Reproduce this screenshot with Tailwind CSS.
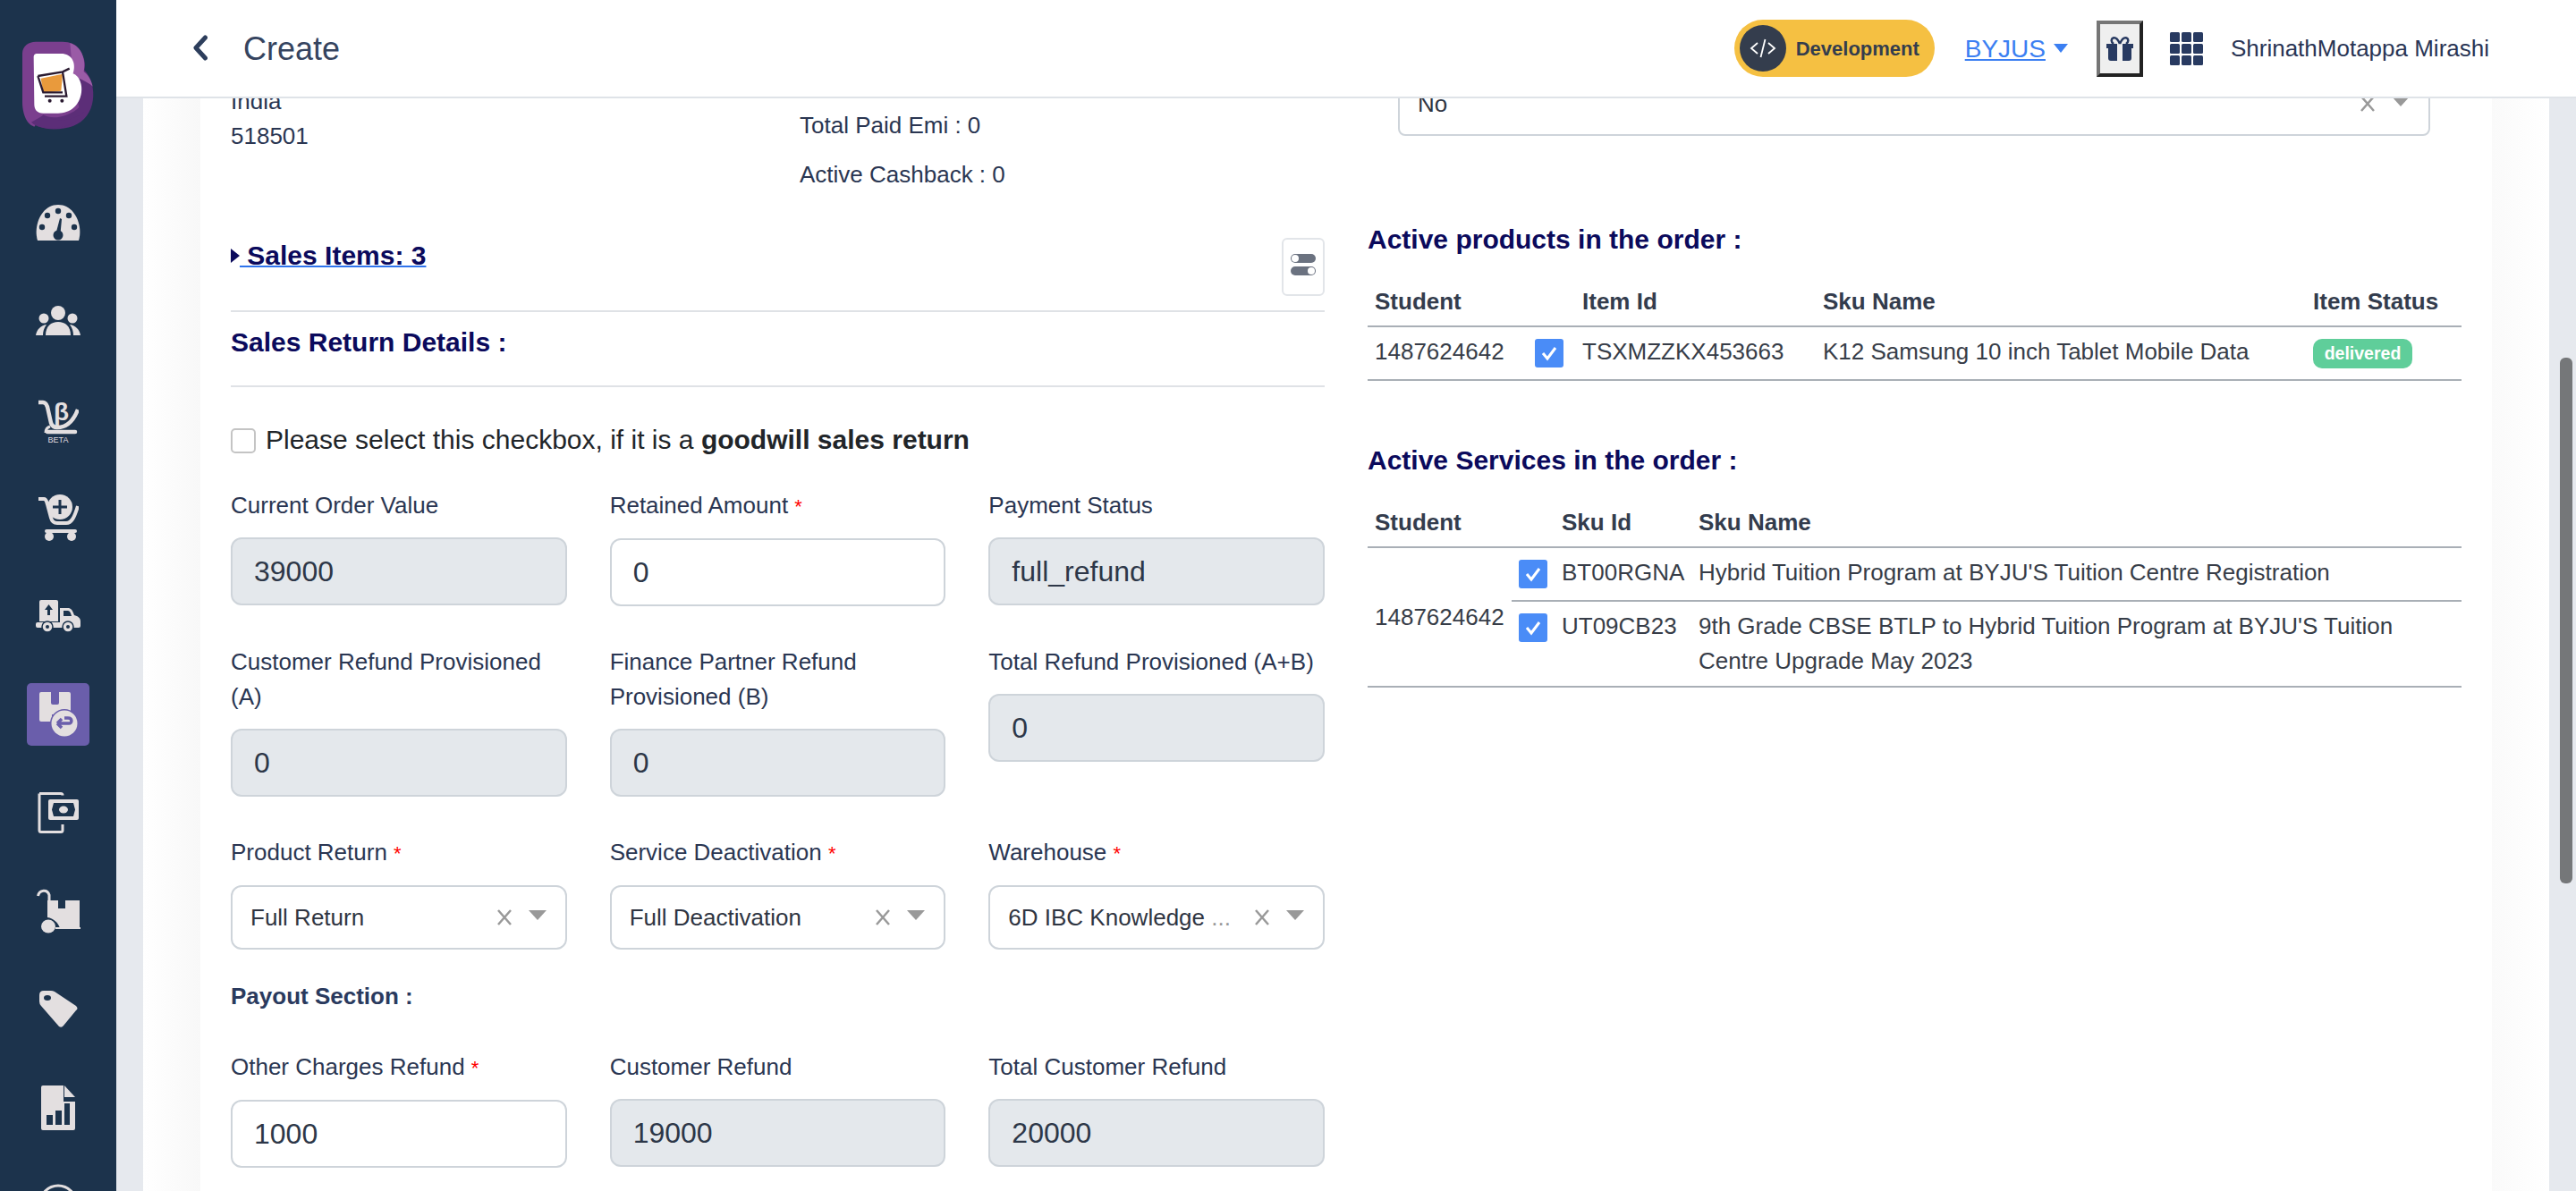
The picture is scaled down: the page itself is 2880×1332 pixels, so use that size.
<!DOCTYPE html>
<html lang="en">
<head>
    <meta charset="UTF-8">
    <meta name="viewport" content="width=device-width, initial-scale=1.0">
    <script src="https://cdn.jsdelivr.net/npm/@tailwindcss/browser@4"></script>
    <title>Create</title>
</head>
<body class="font-['Liberation_Sans',sans-serif] text-[26px] leading-[39px] text-[#2a3652]">
<div class="flex h-[1332px] w-[2880px] overflow-hidden">

    <!-- Sidebar -->
    <aside class="flex w-[130px] shrink-0 flex-col items-center overflow-hidden bg-[#1c334c] pt-[35px] *:shrink-0">
        <svg class="ml-[5px]" width="105" height="120" viewBox="0 0 315 360">
            <path d="M150 40C215 35 250 90 238 130C285 180 280 290 200 318C150 335 70 335 45 285C30 260 30 240 30 200L60 60Z" fill="#5c2e78"/>
            <path d="M30 75C30 50 50 35 75 35H165C215 35 240 70 235 120L200 150L220 255C190 285 130 300 100 280L70 320C40 310 30 270 30 235Z" fill="#7b3f8e"/>
            <path d="M190 40C225 50 245 90 236 135C250 145 262 165 266 185C250 170 225 160 200 150Z" fill="#9a5ba6"/>
            <path d="M100 282C140 305 200 305 235 270C215 310 170 325 130 325C100 325 75 320 60 305Z" fill="#5c2e78"/>
            <path d="M68 88C68 78 72 75 80 75H160C195 75 212 105 200 142C222 150 232 180 228 205C222 250 190 275 150 275H100C80 275 70 262 70 245Z" fill="#fff"/>
            <path d="M92 158L165 143L160 200L100 206Z" fill="#e99a3c"/>
            <path d="M82 150L165 136L188 125M165 136L178 218H105M82 150L100 205H165" fill="none" stroke="#2a1a30" stroke-width="7"/>
            <circle cx="122" cy="233" r="6" fill="#2a1a30"/>
            <circle cx="163" cy="233" r="6" fill="#2a1a30"/>
        </svg>

        <svg class="mt-[74px]" width="50" height="40" viewBox="0 0 50 40" fill="#e3dfe0">
            <path d="M2 40C-3 24 6 0 25 0C44 0 53 24 48 40Z"/>
            <g fill="#1c334c">
                <circle cx="7" cy="25" r="3.2"/>
                <circle cx="13" cy="12" r="3.2"/>
                <circle cx="25" cy="7" r="3.2"/>
                <circle cx="37" cy="12" r="3.2"/>
                <circle cx="43" cy="25" r="3.2"/>
                <circle cx="25" cy="34" r="5.5"/>
                <path d="M27 15L29 16L27.5 32L22.5 32Z"/>
            </g>
        </svg>

        <svg class="mt-[73px]" width="50" height="33" viewBox="0 0 50 33" fill="#e3dfe0">
            <circle cx="25" cy="8" r="8"/>
            <path d="M11 33C11 23 17 18 25 18C33 18 39 23 39 33Z"/>
            <circle cx="9" cy="14" r="5.5"/>
            <circle cx="41" cy="14" r="5.5"/>
            <path d="M0 33C1 27 5 22 12 21C9 25 8 29 8 33Z"/>
            <path d="M50 33C49 27 45 22 38 21C41 25 42 29 42 33Z"/>
        </svg>

        <svg class="mt-[72px]" width="46" height="49" viewBox="0 0 46 49" fill="none" stroke="#e3dfe0">
            <path d="M1 3H6C9 3 10 5 11 8L15 26C16 29 18 31 22 31C32 31 40 24 45 11" stroke-width="4.500"/>
            <path d="M11 36H42" stroke-width="4.500" stroke-linecap="round"/>
            <path d="M9 37C9 33 11 31 14 30" stroke-width="3"/>
            <text x="18" y="23" font-size="28" font-weight="700" fill="#e3dfe0" stroke="none">β</text>
            <text x="23" y="48" font-size="9" text-anchor="middle" fill="#e3dfe0" stroke="none">BETA</text>
        </svg>

        <svg class="mt-[57px]" width="46" height="52" viewBox="0 0 46 52" fill="none" stroke="#e3dfe0">
            <path d="M1 5H7C10 5 10 8 11 11L15 26C16 30 18 32 22 32H32C38 32 41 26 45 13" stroke-width="4"/>
            <path d="M10 41H42" stroke-width="4" stroke-linecap="round"/>
            <circle cx="25" cy="14" r="14" fill="#e3dfe0" stroke="none"/>
            <path d="M25 6V22M17 14H33" stroke="#1c334c" stroke-width="3"/>
            <circle cx="13" cy="47" r="5" fill="#e3dfe0" stroke="none"/>
            <circle cx="38" cy="47" r="5" fill="#e3dfe0" stroke="none"/>
        </svg>

        <svg class="mt-[66px]" width="50" height="36" viewBox="0 0 50 36" fill="#e3dfe0">
            <path d="M4 2Q4 0 6 0H23Q25 0 25 2V24H4Z"/>
            <path d="M14.500 5L19 11H16V17H13V11H10Z" fill="#1c334c"/>
            <path d="M0 27Q0 25 2 25H27V9H36C39 9 41 11 43 17C47 18 50 20 50 24V29Q50 31 48 31H2Q0 31 0 29Z"/>
            <path d="M31 12H36C38 12 39 14 40 18H31Z" fill="#1c334c"/>
            <circle cx="13" cy="30" r="6" fill="#e3dfe0" stroke="#1c334c" stroke-width="1.500"/>
            <circle cx="36" cy="30" r="6" fill="#e3dfe0" stroke="#1c334c" stroke-width="1.500"/>
            <circle cx="13" cy="30" r="2" fill="#1c334c"/>
            <circle cx="36" cy="30" r="2" fill="#1c334c"/>
        </svg>

        <div class="mt-[57px] flex h-[70px] w-[70px] items-center justify-center rounded-[5px] bg-[#6a5eab]">
            <svg width="43" height="50" viewBox="0 0 43 50">
                <path d="M0 2Q0 0 2 0H13V12Q13 14 15 14H20Q22 14 22 12V0H33Q35 0 35 2V20H0V2ZM0 20H14V33H2Q0 33 0 31Z" fill="#e3dfe0"/>
                <path d="M14 20H35V25H14Z" fill="#e3dfe0"/>
                <circle cx="28" cy="35" r="16" fill="#6a5eab"/>
                <circle cx="28" cy="35" r="14.500" fill="#e3dfe0"/>
                <path d="M20 35H33C37 35 37 29 32 29H28M20 35L25 30M20 35L25 40" fill="none" stroke="#6a5eab" stroke-width="3.500"/>
            </svg>
        </div>

        <svg class="mt-[52px]" width="46" height="46" viewBox="0 0 46 46">
            <path d="M2 1.500H26Q28 1.500 28 3.500M28 36V42.500Q28 44.500 26 44.500H4Q2 44.500 2 42.500V1.500" fill="none" stroke="#e3dfe0" stroke-width="3"/>
            <rect x="12" y="8" width="34" height="23" rx="2" fill="#e3dfe0"/>
            <path d="M18 12H40L42 19.500L40 27H18L16 19.500Z" fill="#1c334c"/>
            <ellipse cx="29" cy="19.500" rx="5" ry="4" fill="#e3dfe0"/>
        </svg>

        <svg class="mt-[62px]" width="49" height="50" viewBox="0 0 49 50" fill="#e3dfe0">
            <path d="M1.500 8C3 1 12 0 14 7V32" fill="none" stroke="#e3dfe0" stroke-width="3"/>
            <path d="M12 13H24V22H32V13H48V44H26C24 38 19 33 12 32Z"/>
            <ellipse cx="13" cy="42" rx="8" ry="7.500"/>
            <path d="M21 43H49V45H21Z"/>
        </svg>

        <svg class="mt-[64px]" width="43" height="42" viewBox="0 0 43 42">
            <path d="M0 5Q0 0 5 0H13Q15 0 17 1L41 17Q44 20 41 22L27 39Q25 42 22 40L2 17Q0 15 0 12Z" fill="#e3dfe0"/>
            <ellipse cx="9" cy="8" rx="4" ry="3" fill="#1c334c"/>
        </svg>

        <svg class="mt-[64px]" width="38" height="50" viewBox="0 0 38 50">
            <path d="M0 2Q0 0 2 0H25V18H38V48Q38 50 36 50H2Q0 50 0 48Z" fill="#e3dfe0"/>
            <path d="M26 0L38 13H26Z" fill="#e3dfe0"/>
            <path d="M6 33H13V44H6ZM16 28H23V44H16ZM26 20H32V44H26Z" fill="#1c334c"/>
        </svg>

        <svg class="mt-[60px]" width="44" height="44" viewBox="0 0 44 44" fill="none" stroke="#e3dfe0" stroke-width="3">
            <circle cx="22" cy="22" r="20"/>
            <circle cx="22" cy="22" r="12"/>
        </svg>
    </aside>

    <div class="flex min-w-0 flex-1 flex-col">
        <!-- Top bar -->
        <header class="flex h-[110px] shrink-0 items-center border-b-2 border-[#dfe3e8] bg-white pr-[97px] pl-[85px]">
            <svg class="mt-[-2px]" width="17" height="29" viewBox="0 0 17 29" fill="none" stroke="#2d3e5c" stroke-width="5" stroke-linecap="round" stroke-linejoin="round">
                <path d="M14.500 3L4 14.500L14.500 26"/>
            </svg>
            <span class="ml-[40px] text-[36px] text-[#35445f]">Create</span>

            <div class="ml-auto flex items-center">
                <div class="flex h-[64px] w-[224px] items-center rounded-full bg-[#f5c042] pl-[6px]">
                    <span class="flex h-[52px] w-[52px] items-center justify-center rounded-full bg-[#343d4d]">
                        <svg width="30" height="30" viewBox="0 0 30 30" fill="none" stroke="#fff" stroke-width="1.800">
                            <path d="M9 9L2 15L9 21M21 9L28 15L21 21M17.500 5L12.500 25"/>
                        </svg>
                    </span>
                    <span class="ml-[11px] text-[22px] font-bold text-[#343d4d]">Development</span>
                </div>
                <span class="ml-[34px] text-[28px] text-[#3b7ff2] underline">BYJUS</span>
                <span class="ml-[9px] h-0 w-0 border-x-[8px] border-t-[10px] border-x-transparent border-t-[#3b7ff2]"></span>
                <button class="ml-[32px] flex h-[63px] w-[52px] items-center justify-center border-4 border-t-[#767676] border-r-[#222222] border-b-[#222222] border-l-[#767676] bg-[#efefef]">
                    <svg width="30" height="27" viewBox="0 0 30 27">
                        <path d="M15 8C12 1 9 1 7.500 1.500C5 2.500 5 6 8 8M15 8C18 1 21 1 22.500 1.500C25 2.500 25 6 22 8" fill="none" stroke="#283a61" stroke-width="2.500"/>
                        <path d="M0 8H12V15H2V13H0ZM18 8H30V13H28V15H18Z" fill="#283a61"/>
                        <path d="M2 15H12V27H5Q2 27 2 24ZM18 15H28V24Q28 27 25 27H18Z" fill="#283a61"/>
                    </svg>
                </button>
                <div class="ml-[30px] grid grid-cols-3 gap-[2px]">
                    <span class="h-[11px] w-[11px] rounded-[1.500px] bg-[#283a61]"></span>
                    <span class="h-[11px] w-[11px] rounded-[1.500px] bg-[#283a61]"></span>
                    <span class="h-[11px] w-[11px] rounded-[1.500px] bg-[#283a61]"></span>
                    <span class="h-[11px] w-[11px] rounded-[1.500px] bg-[#283a61]"></span>
                    <span class="h-[11px] w-[11px] rounded-[1.500px] bg-[#283a61]"></span>
                    <span class="h-[11px] w-[11px] rounded-[1.500px] bg-[#283a61]"></span>
                    <span class="h-[11px] w-[11px] rounded-[1.500px] bg-[#283a61]"></span>
                    <span class="h-[11px] w-[11px] rounded-[1.500px] bg-[#283a61]"></span>
                    <span class="h-[11px] w-[11px] rounded-[1.500px] bg-[#283a61]"></span>
                </div>
                <span class="ml-[31px] text-[26px] text-[#2a3555]">ShrinathMotappa Mirashi</span>
            </div>
        </header>

        <!-- Scrolled page -->
        <div class="flex min-h-0 flex-1 overflow-hidden bg-[#e6e9ee]">
            <div class="w-[30px] shrink-0"></div>
            <div class="w-[64px] shrink-0 bg-linear-to-r from-white to-[#f8f8f8]"></div>

            <main class="grid w-[2562px] shrink-0 grid-cols-2 items-start gap-x-[48px] bg-white px-[34px]">
                <!-- Left column -->
                <section class="mt-[-16px]">
                    <div class="flex h-[172px]">
                        <div class="w-[636px]">
                            <p>India</p>
                            <p>518501</p>
                        </div>
                        <div class="pt-[27px]">
                            <p>Total Paid Emi : 0</p>
                            <p class="mt-[16px]">Active Cashback : 0</p>
                        </div>
                    </div>

                    <div class="flex h-[65px] items-start justify-between">
                        <div class="flex items-center text-[30px] leading-[39px] font-bold text-[#0b0a5c]">
                            <span class="h-0 w-0 border-y-[8px] border-l-[10px] border-y-transparent border-l-[#0b0a5c]"></span>
                            <span class="whitespace-pre underline decoration-[#2f74ec] decoration-2"> Sales Items: 3</span>
                        </div>
                        <div class="flex h-[65px] w-[48px] flex-col items-center justify-center gap-[4px] rounded-[6px] border-2 border-[#e2e5e9] pb-[6px]">
                            <span class="flex h-[10px] w-[28px] items-center justify-start rounded-full bg-[#6b7280] px-[1px]"><span class="h-[8px] w-[8px] rounded-full bg-white"></span></span>
                            <span class="flex h-[10px] w-[28px] items-center justify-end rounded-full bg-[#6b7280] px-[1px]"><span class="h-[8px] w-[8px] rounded-full bg-white"></span></span>
                        </div>
                    </div>

                    <div class="mt-[16px] border-t-2 border-[#dfe2e6]"></div>
                    <h2 class="h-[82px] pt-[11px] text-[30px] leading-[45px] font-bold text-[#0b0a5c]">Sales Return Details :</h2>
                    <div class="border-t-2 border-[#dfe2e6]"></div>

                    <label class="mt-[36px] flex items-center text-[30px] leading-[45px] text-[#212529]">
                        <span class="mt-[3px] mr-[11px] h-[28px] w-[28px] rounded-[5px] border-2 border-[#c4c4c4] bg-white"></span>
                        <span>Please select this checkbox, if it is a <b>goodwill sales return</b></span>
                    </label>

                    <div class="mt-[32px] grid grid-cols-3 items-start gap-x-[48px] gap-y-[43px]">
                        <div>
                            <p class="mb-[16px]">Current Order Value</p>
                            <input readonly value="39000" class="h-[76px] w-full rounded-[12px] border-2 border-[#ced4da] bg-[#e4e8ec] px-[24px] text-[32px] text-[#2d3748]">
                        </div>
                        <div>
                            <p class="mb-[16px]">Retained Amount <span class="text-[22px] text-[#f00]">*</span></p>
                            <input readonly value="0" class="h-[76px] w-full rounded-[12px] border-2 border-[#ced4da] bg-white px-[24px] text-[32px] text-[#2d3748]">
                        </div>
                        <div>
                            <p class="mb-[16px]">Payment Status</p>
                            <input readonly value="full_refund" class="h-[76px] w-full rounded-[12px] border-2 border-[#ced4da] bg-[#e4e8ec] px-[24px] text-[32px] text-[#2d3748]">
                        </div>

                        <div>
                            <p class="mb-[16px]">Customer Refund Provisioned (A)</p>
                            <input readonly value="0" class="h-[76px] w-full rounded-[12px] border-2 border-[#ced4da] bg-[#e4e8ec] px-[24px] text-[32px] text-[#2d3748]">
                        </div>
                        <div>
                            <p class="mb-[16px]">Finance Partner Refund Provisioned (B)</p>
                            <input readonly value="0" class="h-[76px] w-full rounded-[12px] border-2 border-[#ced4da] bg-[#e4e8ec] px-[24px] text-[32px] text-[#2d3748]">
                        </div>
                        <div>
                            <p class="mb-[16px] whitespace-nowrap">Total Refund Provisioned (A+B)</p>
                            <input readonly value="0" class="h-[76px] w-full rounded-[12px] border-2 border-[#ced4da] bg-[#e4e8ec] px-[24px] text-[32px] text-[#2d3748]">
                        </div>

                        <div>
                            <p class="mb-[16px]">Product Return <span class="text-[22px] text-[#f00]">*</span></p>
                            <div class="flex h-[72px] items-center rounded-[12px] border-2 border-[#ced4da] pr-[21px] pl-[20px] text-[#2f3542]">
                                <span class="flex-1">Full Return</span>
                                <svg width="18" height="18" viewBox="0 0 18 18" stroke="#999" stroke-width="2.500"><path d="M2 1L16 17M16 1L2 17"/></svg>
                                <span class="mt-[-6px] ml-[18px] h-0 w-0 border-x-[10px] border-t-[11px] border-x-transparent border-t-[#999]"></span>
                            </div>
                        </div>
                        <div>
                            <p class="mb-[16px]">Service Deactivation <span class="text-[22px] text-[#f00]">*</span></p>
                            <div class="flex h-[72px] items-center rounded-[12px] border-2 border-[#ced4da] pr-[21px] pl-[20px] text-[#2f3542]">
                                <span class="flex-1">Full Deactivation</span>
                                <svg width="18" height="18" viewBox="0 0 18 18" stroke="#999" stroke-width="2.500"><path d="M2 1L16 17M16 1L2 17"/></svg>
                                <span class="mt-[-6px] ml-[18px] h-0 w-0 border-x-[10px] border-t-[11px] border-x-transparent border-t-[#999]"></span>
                            </div>
                        </div>
                        <div>
                            <p class="mb-[16px]">Warehouse <span class="text-[22px] text-[#f00]">*</span></p>
                            <div class="flex h-[72px] items-center rounded-[12px] border-2 border-[#ced4da] pr-[21px] pl-[20px] text-[#2f3542]">
                                <span class="flex-1 whitespace-nowrap">6D IBC Knowledge <span class="text-[#999]">...</span></span>
                                <svg width="18" height="18" viewBox="0 0 18 18" stroke="#999" stroke-width="2.500"><path d="M2 1L16 17M16 1L2 17"/></svg>
                                <span class="mt-[-6px] ml-[18px] h-0 w-0 border-x-[10px] border-t-[11px] border-x-transparent border-t-[#999]"></span>
                            </div>
                        </div>
                    </div>

                    <p class="mt-[33px] font-bold text-[#2a3a5e]">Payout Section :</p>

                    <div class="mt-[40px] grid grid-cols-3 items-start gap-x-[48px]">
                        <div>
                            <p class="mb-[16px]">Other Charges Refund <span class="text-[22px] text-[#f00]">*</span></p>
                            <input readonly value="1000" class="h-[76px] w-full rounded-[12px] border-2 border-[#ced4da] bg-white px-[24px] text-[32px] text-[#2d3748]">
                        </div>
                        <div>
                            <p class="mb-[16px]">Customer Refund</p>
                            <input readonly value="19000" class="h-[76px] w-full rounded-[12px] border-2 border-[#ced4da] bg-[#e4e8ec] px-[24px] text-[32px] text-[#2d3748]">
                        </div>
                        <div>
                            <p class="mb-[16px]">Total Customer Refund</p>
                            <input readonly value="20000" class="h-[76px] w-full rounded-[12px] border-2 border-[#ced4da] bg-[#e4e8ec] px-[24px] text-[32px] text-[#2d3748]">
                        </div>
                    </div>
                </section>

                <!-- Right column -->
                <section class="mt-[-34px]">
                    <div class="ml-[34px] flex h-[76px] w-[1154px] items-center rounded-[8px] border-2 border-[#ced4da] pt-[4px] pr-[21px] pl-[20px] text-[#2f3542]">
                        <span class="flex-1">No</span>
                        <svg width="18" height="18" viewBox="0 0 18 18" stroke="#999" stroke-width="2.500"><path d="M2 1L16 17M16 1L2 17"/></svg>
                        <span class="mt-[-6px] ml-[18px] h-0 w-0 border-x-[10px] border-t-[11px] border-x-transparent border-t-[#999]"></span>
                    </div>

                    <h2 class="mt-[93px] mb-[17px] text-[30px] leading-[45px] font-bold text-[#0b0a5c]">Active products in the order :</h2>
                    <table class="w-full table-fixed text-[#373d48]">
                        <colgroup>
                            <col class="w-[179px]"><col class="w-[53px]"><col class="w-[269px]"><col class="w-[548px]"><col class="w-[174px]">
                        </colgroup>
                        <thead>
                            <tr class="h-[58px] border-b-2 border-[#a9afb6] text-left text-[#333c4d]">
                                <th class="pt-[3px] pl-[8px]">Student</th>
                                <th></th>
                                <th class="pt-[3px] pl-[8px]">Item Id</th>
                                <th class="pt-[3px] pl-[8px]">Sku Name</th>
                                <th class="pt-[3px] pl-[8px]">Item Status</th>
                            </tr>
                        </thead>
                        <tbody>
                            <tr class="h-[60px] border-b-2 border-[#a9afb6]">
                                <td class="pt-[8px] pl-[8px] align-top">1487624642</td>
                                <td class="pt-[13px] pl-[8px] align-top">
                                    <span class="flex h-[32px] w-[32px] items-center justify-center rounded-[3px] bg-[#4a8cf7]">
                                        <svg width="20" height="18" viewBox="0 0 20 18" fill="none" stroke="#fff" stroke-width="3"><path d="M3 9L8 15L17 3"/></svg>
                                    </span>
                                </td>
                                <td class="pt-[8px] pl-[8px] align-top">TSXMZZKX453663</td>
                                <td class="pt-[8px] pl-[8px] align-top">K12 Samsung 10 inch Tablet Mobile Data</td>
                                <td class="pt-[13px] pl-[8px] align-top">
                                    <span class="flex h-[33px] w-[111px] items-center justify-center rounded-[10px] bg-[#5fce9a] text-[19.500px] font-bold text-white">delivered</span>
                                </td>
                            </tr>
                        </tbody>
                    </table>

                    <h2 class="mt-[66px] mb-[17px] text-[30px] leading-[45px] font-bold text-[#0b0a5c]">Active Services in the order :</h2>
                    <table class="w-full table-fixed text-[#373d48]">
                        <colgroup>
                            <col class="w-[161px]"><col class="w-[48px]"><col class="w-[153px]"><col>
                        </colgroup>
                        <thead>
                            <tr class="h-[58px] border-b-2 border-[#a9afb6] text-left text-[#333c4d]">
                                <th class="pt-[3px] pl-[8px]">Student</th>
                                <th></th>
                                <th class="pt-[3px] pl-[8px]">Sku Id</th>
                                <th class="pt-[3px] pl-[8px]">Sku Name</th>
                            </tr>
                        </thead>
                        <tbody>
                            <tr class="h-[60px] border-b-2 border-[#a9afb6]">
                                <td rowspan="2" class="pl-[8px] align-middle">1487624642</td>
                                <td class="pt-[13px] pl-[8px] align-top">
                                    <span class="flex h-[32px] w-[32px] items-center justify-center rounded-[3px] bg-[#4a8cf7]">
                                        <svg width="20" height="18" viewBox="0 0 20 18" fill="none" stroke="#fff" stroke-width="3"><path d="M3 9L8 15L17 3"/></svg>
                                    </span>
                                </td>
                                <td class="pt-[8px] pl-[8px] align-top">BT00RGNA</td>
                                <td class="pt-[8px] pl-[8px] align-top">Hybrid Tuition Program at BYJU'S Tuition Centre Registration</td>
                            </tr>
                            <tr class="h-[96px] border-b-2 border-[#a9afb6]">
                                <td class="pt-[13px] pl-[8px] align-top">
                                    <span class="flex h-[32px] w-[32px] items-center justify-center rounded-[3px] bg-[#4a8cf7]">
                                        <svg width="20" height="18" viewBox="0 0 20 18" fill="none" stroke="#fff" stroke-width="3"><path d="M3 9L8 15L17 3"/></svg>
                                    </span>
                                </td>
                                <td class="pt-[8px] pl-[8px] align-top">UT09CB23</td>
                                <td class="pt-[8px] pr-[60px] pl-[8px] align-top">9th Grade CBSE BTLP to Hybrid Tuition Program at BYJU'S Tuition Centre Upgrade May 2023</td>
                            </tr>
                        </tbody>
                    </table>
                </section>
            </main>

            <div class="w-[64px] shrink-0 bg-linear-to-r from-[#fafafa] to-white"></div>

            <!-- Scrollbar -->
            <div class="flex-1 pt-[290px] pl-[12px]">
                <div class="h-[588px] w-[14px] rounded-[6px] bg-[#757779]"></div>
            </div>
        </div>
    </div>
</div>
</body>
</html>
